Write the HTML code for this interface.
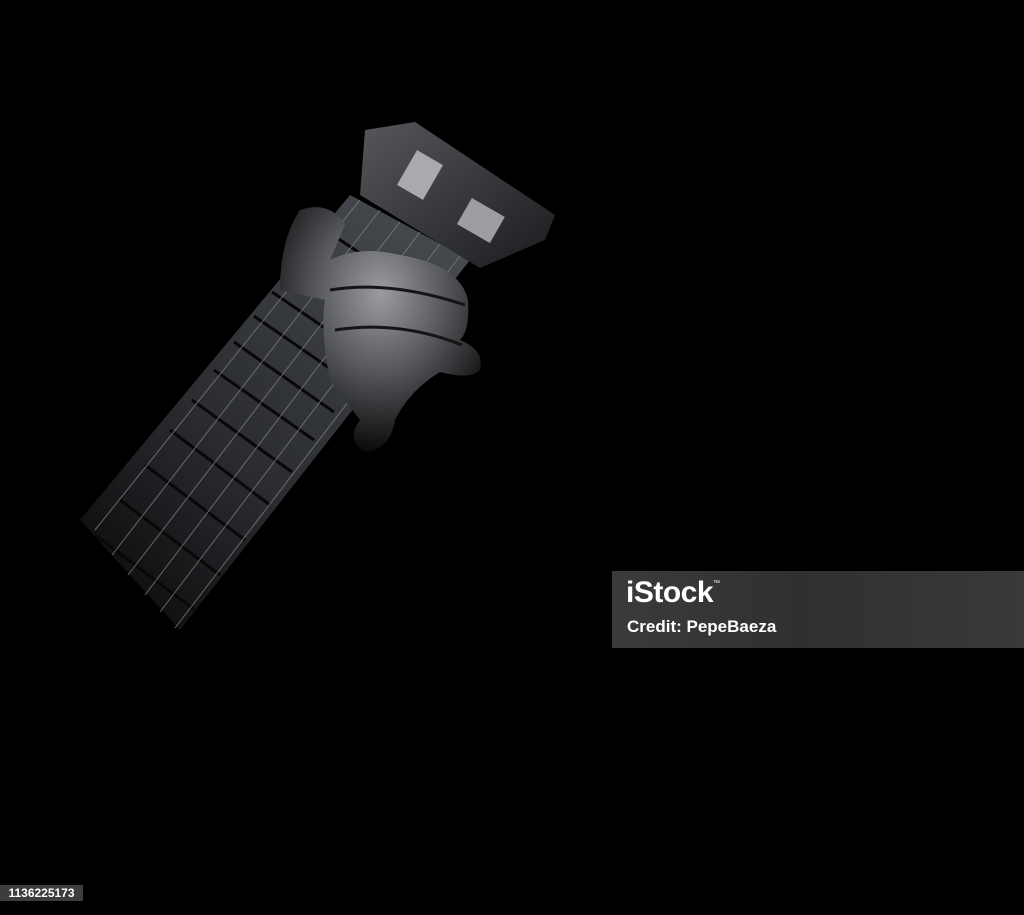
<!DOCTYPE html>
<html><head><meta charset="utf-8"><style>
html,body{margin:0;padding:0;background:#000;width:1024px;height:915px;overflow:hidden;position:relative;font-family:"Liberation Sans",sans-serif}
.ban{position:absolute;left:612px;top:571px;width:412px;height:77px;background:linear-gradient(90deg,#3a3b3d,#2f3032 45%,#38393b);}
.ban .t1{position:absolute;left:14px;top:5px;color:#fff;font-weight:bold;font-size:30px;letter-spacing:-0.5px}
.ban .t1 sup{font-size:7px;font-weight:normal;vertical-align:top;position:relative;top:4px}
.ban .t2{position:absolute;left:15px;top:46px;color:#fff;font-weight:bold;font-size:17px}
.num{position:absolute;left:0;top:885px;width:83px;height:16px;background:#3c3d3f;color:#fff;font-size:12px;font-weight:bold;line-height:16px;text-align:center}
</style></head><body>
<svg width="1024" height="915" style="position:absolute;left:0;top:0">
<defs>
<linearGradient id="nk" x1="0" y1="1" x2="1" y2="0"><stop offset="0" stop-color="#050505"/><stop offset="0.4" stop-color="#2a2c30"/><stop offset="1" stop-color="#4a4d52"/></linearGradient>
<linearGradient id="hd" x1="0" y1="0" x2="1" y2="1"><stop offset="0" stop-color="#55575b"/><stop offset="1" stop-color="#1a1b1d"/></linearGradient>
<radialGradient id="hn" cx="0.5" cy="0.35" r="0.65"><stop offset="0" stop-color="#9a9ca0"/><stop offset="0.5" stop-color="#55575b"/><stop offset="1" stop-color="#0a0a0a"/></radialGradient>
</defs>
<polygon points="80,520 180,630 470,260 350,195" fill="url(#nk)"/>
<g stroke="#080808" stroke-width="3">
<line x1="95" y1="535" x2="195" y2="610"/><line x1="120" y1="500" x2="220" y2="575"/><line x1="145" y1="465" x2="245" y2="540"/><line x1="170" y1="430" x2="270" y2="505"/><line x1="192" y1="400" x2="292" y2="472"/><line x1="214" y1="370" x2="314" y2="440"/><line x1="234" y1="342" x2="334" y2="412"/><line x1="254" y1="316" x2="354" y2="385"/><line x1="272" y1="292" x2="372" y2="360"/><line x1="290" y1="268" x2="390" y2="335"/><line x1="306" y1="248" x2="406" y2="314"/><line x1="322" y1="228" x2="422" y2="294"/>
</g>
<g stroke="#7a7c80" stroke-width="1" opacity="0.8">
<line x1="95" y1="530" x2="360" y2="200"/><line x1="112" y1="555" x2="380" y2="210"/><line x1="128" y1="575" x2="400" y2="222"/><line x1="145" y1="595" x2="420" y2="232"/><line x1="160" y1="612" x2="440" y2="244"/><line x1="175" y1="628" x2="460" y2="256"/>
</g>
<polygon points="365,130 415,122 555,215 545,240 480,268 360,195" fill="url(#hd)"/>
<rect x="405" y="155" width="30" height="40" fill="#a8aaad" transform="rotate(30 420 175)"/>
<rect x="462" y="205" width="38" height="30" fill="#9c9ea1" transform="rotate(30 480 220)"/>
<path d="M300,210 Q330,200 345,225 L330,260 Q360,245 400,255 Q460,265 468,300 Q470,330 460,340 Q485,350 480,370 Q470,380 440,372 Q410,390 395,420 Q390,450 365,452 Q345,440 360,420 L330,380 Q320,330 325,300 L280,290 Q280,240 300,210 Z" fill="url(#hn)"/>
<g stroke="#151515" stroke-width="3" fill="none">
<path d="M330,290 Q390,280 465,305"/><path d="M335,330 Q400,320 462,345"/>
</g>
</svg>
<div class="ban"><div class="t1">iStock<sup>™</sup></div><div class="t2">Credit: PepeBaeza</div></div>
<div class="num">1136225173</div>
</body></html>
